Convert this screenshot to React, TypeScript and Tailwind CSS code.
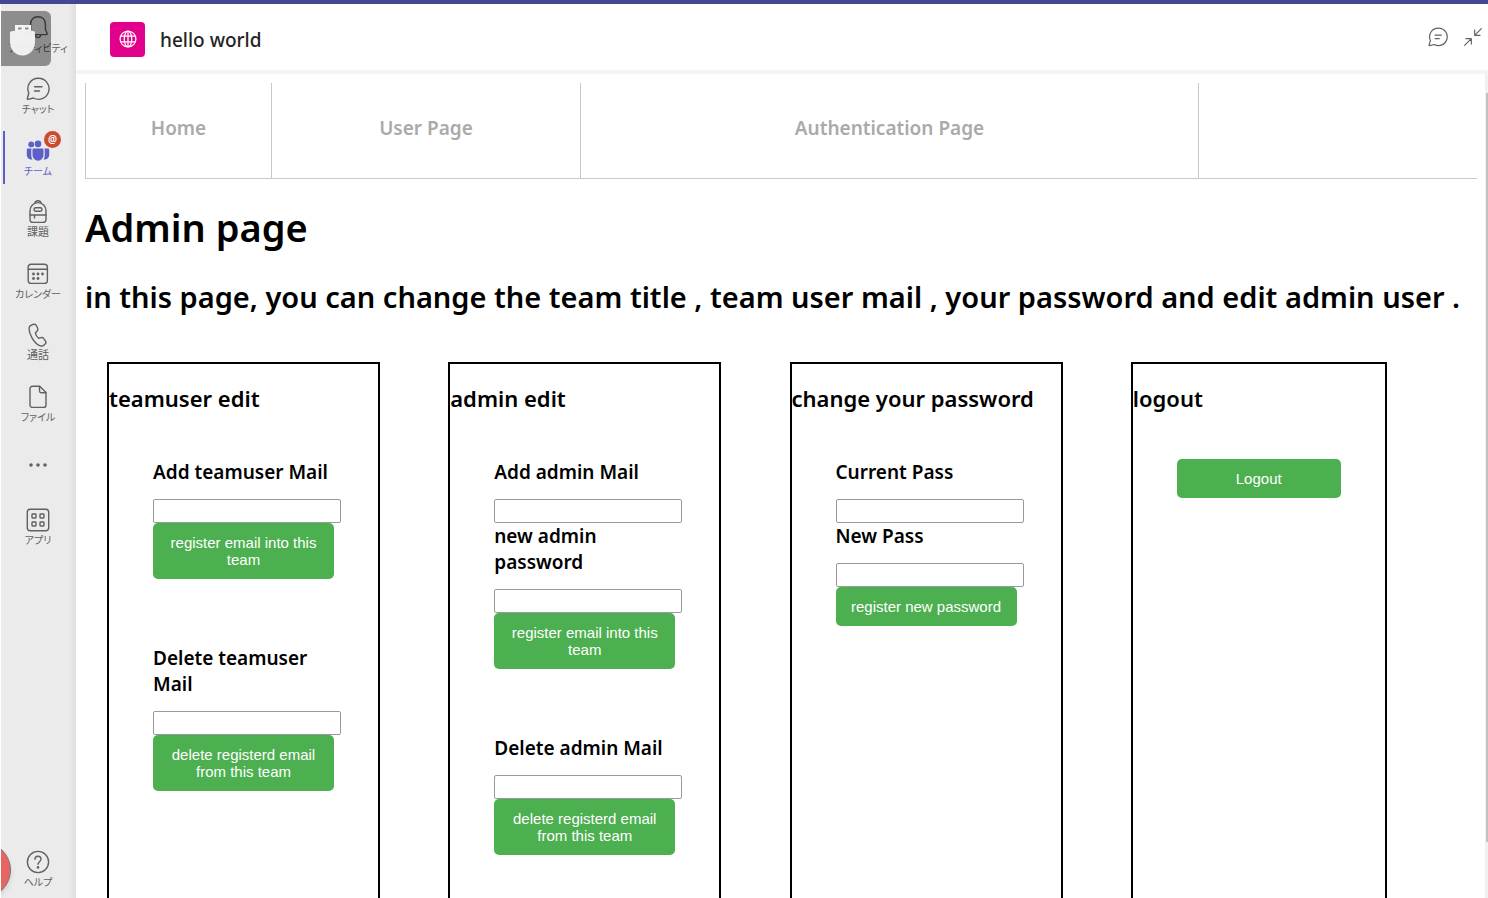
import type { ReactNode } from "react";

const uiFont = "font-['Noto_Sans','Noto_Sans_CJK_JP',sans-serif]";

function Line({ size, children }: { size: string; children: ReactNode }) {
  return (
    <svg viewBox="0 0 24 24" className={size} fill="none" stroke="currentColor" strokeWidth="1.4" strokeLinecap="round" strokeLinejoin="round" aria-hidden="true">
      {children}
    </svg>
  );
}

function BellIcon() {
  return (
    <Line size="size-6">
      <path d="M12 .8c-4.500 0-7.400 3-7.400 7.200v5.200L2.900 17.600c-.2.500.1 1 .7 1h16.800c.6 0 .9-.5.7-1L19.400 13.200V8c0-4.200-2.900-7.200-7.400-7.200z" />
      <path d="M9.200 18.600c.3 1.900 1.400 3 2.800 3s2.500-1.100 2.800-3" />
    </Line>
  );
}

function ChatIcon({ size }: { size: string }) {
  return (
    <Line size={size}>
      <path d="M12.500 1.300a10.500 10.500 0 1 1-5 19.700L2 22.400a.6.600 0 0 1-.7-.7L2.800 16A10.400 10.400 0 0 1 12.500 1.300z" />
      <path d="M8.500 9.800h7.500M8.500 14h5" />
    </Line>
  );
}

function TeamsIcon() {
  return (
    <svg viewBox="0 0 24 24" className="size-6" fill="currentColor" aria-hidden="true">
      <circle cx="5.200" cy="5.400" r="2.900" />
      <circle cx="12" cy="4.900" r="3.300" />
      <path d="M7.700 9.500h8.600c.7 0 1.200.5 1.200 1.200v5.500a5.500 5.500 0 0 1-11 0v-5.500c0-.7.500-1.200 1.200-1.200z" />
      <path d="M2 9.500h3.700c-.3.500-.4.900-.4 1.400v5.500c0 1.600.5 2.900 1.300 4-3.300.4-5.800-1.500-5.800-4.700v-5c0-.7.5-1.200 1.200-1.200z" />
      <path d="M18.300 9.500H22c.7 0 1.200.5 1.200 1.200v5c0 3.200-2.500 5.100-5.800 4.700.8-1.100 1.300-2.400 1.300-4v-5.500c0-.5-.1-.9-.4-1.400z" />
    </svg>
  );
}

function BackpackIcon() {
  return (
    <Line size="size-6">
      <path d="M4 10.600a8 8 0 0 1 16 0v8.600a3.200 3.200 0 0 1-3.200 3.200H7.200A3.200 3.200 0 0 1 4 19.200z" />
      <path d="M8.800 3.200c.4-1.600 1.600-2.500 3.200-2.500s2.800.9 3.200 2.500M4 15h16M8.500 15v3" />
      <rect x="8" y="7.800" width="8" height="3.400" rx="1.700" />
    </Line>
  );
}

function CalendarIcon() {
  return (
    <Line size="size-6">
      <rect x="2.200" y="2.200" width="19.200" height="19.200" rx="3" />
      <path d="M2.200 7.200h19.200" />
      <g fill="currentColor" stroke="none">
        <circle cx="7.500" cy="12" r="1.400" />
        <circle cx="12" cy="12" r="1.400" />
        <circle cx="16.500" cy="12" r="1.400" />
        <circle cx="7.500" cy="16.500" r="1.400" />
        <circle cx="12" cy="16.500" r="1.400" />
      </g>
    </Line>
  );
}

function PhoneIcon() {
  return (
    <Line size="size-6">
      <path d="M6.200 1.700l1.500-.4c1.200-.3 2.300.3 2.800 1.400l1.100 2.600c.4 1 .2 2.100-.6 2.900L9.300 9.800c.4 2 1.800 4.400 3.500 5.600l2.200-.7c1-.3 2.100 0 2.700.9l1.700 2.300c.7 1 .6 2.300-.3 3.100l-1 .9c-1 1-2.500 1.300-3.800.9-3.300-1-6-4-8.300-8C3.700 10.800 2.500 7 3.400 3.900c.4-1.100 1.500-1.900 2.800-2.200z" />
    </Line>
  );
}

function FileIcon() {
  return (
    <Line size="size-6">
      <path d="M6.500 1.300h7.200l6.300 6.300v12.300a2.500 2.500 0 0 1-2.500 2.500h-11A2.500 2.500 0 0 1 4 19.900V3.800a2.500 2.500 0 0 1 2.500-2.500z" />
      <path d="M13.500 1.500v4.600c0 1 .7 1.700 1.700 1.700h4.600" />
    </Line>
  );
}

function AppsIcon() {
  return (
    <Line size="size-6">
      <rect x="1.300" y="1.300" width="21.400" height="21.400" rx="3" />
      <rect x="6" y="6" width="4" height="4" rx=".7" />
      <rect x="14" y="6" width="4" height="4" rx=".7" />
      <rect x="6" y="14" width="4" height="4" rx=".7" />
      <rect x="14" y="14" width="4" height="4" rx=".7" />
    </Line>
  );
}

function HelpIcon() {
  return (
    <Line size="size-6">
      <circle cx="12" cy="12" r="10.600" />
      <path d="M9 9.200c0-1.800 1.300-3 3-3s3 1.200 3 2.900c0 2.400-3 2.700-3 5.200" />
      <circle cx="12" cy="17.400" r=".6" fill="currentColor" />
    </Line>
  );
}

function DotsIcon() {
  return (
    <svg viewBox="0 0 24 24" className="size-6" fill="currentColor" aria-hidden="true">
      <circle cx="5" cy="12" r="1.800" />
      <circle cx="12" cy="12" r="1.800" />
      <circle cx="19" cy="12" r="1.800" />
    </svg>
  );
}

function GlobeIcon() {
  return (
    <svg viewBox="0 0 24 24" className="size-5" fill="none" stroke="currentColor" strokeWidth="1.500" aria-hidden="true">
      <circle cx="12" cy="12" r="9.500" />
      <ellipse cx="12" cy="12" rx="4.500" ry="9.500" />
      <path d="M12 2.500v19M3.500 8.500h17M3.500 15.500h17" />
    </svg>
  );
}

function CollapseIcon() {
  return (
    <Line size="size-5">
      <path d="M22 2L14 10M14 3.500v6.500h6.500M2 22L10 14M3.500 14h6.500v6.500" />
    </Line>
  );
}

function RailItem({ icon, label, wide, active }: { icon: ReactNode; label: string; wide?: boolean; active?: boolean }) {
  return (
    <button
      type="button"
      className={`relative flex w-full flex-col items-center pt-3 ${active ? "text-[#5b5fc7]" : "text-[#616161]"}`}
    >
      {active && <span className="absolute top-1 left-0.5 h-[53px] w-0.5 bg-[#5b5fc7]" />}
      {icon}
      <span className={`leading-4 whitespace-nowrap [font-feature-settings:'palt'] ${wide ? "text-[11px]" : "text-[10px]"}`}>{label}</span>
      {active && (
        <span className="absolute top-1 left-[43px] flex size-[17px] items-center justify-center rounded-full bg-[#cc4a31] text-[10px] leading-none font-semibold text-white">
          @
        </span>
      )}
    </button>
  );
}

function Field({ id, label, type = "text" }: { id: string; label: string; type?: string }) {
  return (
    <div>
      <label htmlFor={id} className="mb-3.5 block text-[19px] leading-[26px] font-semibold">
        {label}
      </label>
      <input id={id} type={type} className="block h-6 w-[188px] rounded-xs border border-[#999] bg-white px-1 text-sm" />
    </div>
  );
}

function GreenButton({ children }: { children: ReactNode }) {
  return (
    <button type="submit" className="block w-full rounded-[5px] bg-[#4caf50] px-3 py-[11px] font-['Liberation_Sans',sans-serif] text-[15px] leading-[17px] text-white">
      {children}
    </button>
  );
}

function Card({ title, narrow, children }: { title: string; narrow?: boolean; children: ReactNode }) {
  return (
    <section className={`h-[640px] border-2 border-black pt-[18px] ${narrow ? "w-3/4" : "w-4/5"}`}>
      <h3 className="text-[22px] leading-[33px] font-semibold whitespace-nowrap">{title}</h3>
      <div className="flex flex-col gap-[66px] px-11 pt-11">{children}</div>
    </section>
  );
}

function Form({ children }: { children: ReactNode }) {
  return <form onSubmit={(e) => e.preventDefault()}>{children}</form>;
}

export default function App() {
  return (
    <div className={`flex h-screen flex-col overflow-hidden bg-white text-black ${uiFont}`}>
      <div className="h-1 shrink-0 bg-[#444791]" />
      <div className="flex min-h-0 flex-1">
        <aside className="relative ml-px flex w-[75px] shrink-0 flex-col justify-between overflow-hidden bg-linear-to-r from-[#ebebeb] from-90% to-[#dfdfdf] pr-px">
          <div className="grid h-[553px] auto-rows-fr">
            <RailItem icon={<BellIcon />} label="アクティビティ" />
            <RailItem icon={<ChatIcon size="size-6" />} label="チャット" />
            <RailItem icon={<TeamsIcon />} label="チーム" active />
            <RailItem icon={<BackpackIcon />} label="課題" wide />
            <RailItem icon={<CalendarIcon />} label="カレンダー" />
            <RailItem icon={<PhoneIcon />} label="通話" wide />
            <RailItem icon={<FileIcon />} label="ファイル" />
            <button type="button" aria-label="その他" className="flex items-center justify-center text-[#616161]">
              <DotsIcon />
            </button>
            <RailItem icon={<AppsIcon />} label="アプリ" />
          </div>
          <div className="h-[60px]">
            <RailItem icon={<HelpIcon />} label="ヘルプ" />
          </div>
          <div className="absolute top-[7px] left-0 h-[55px] w-[50px] rounded-r-md bg-black/40">
            <svg viewBox="0 0 50 55" className="size-full" aria-hidden="true">
              <path d="M14 14h16v6H14z" fill="#f4f4f4" />
              <path d="M12 20h20c1.500 0 2 .7 2 2v9c0 8-5.500 13.500-12.500 13.500S9 39 9 31v-9c0-1.300 1-2 3-2z" fill="#f4f4f4" fillOpacity=".96" />
              <path d="M17 17.500h3.500M24 17.500h3.500" stroke="#8c8c8c" strokeWidth="2" />
            </svg>
          </div>
          <div className="absolute bottom-0 -left-[46px] size-14 rounded-full border border-[#777] bg-[#e96564] shadow-md" />
        </aside>

        <div className="flex min-w-0 flex-1 flex-col">
          <header className="flex h-[70px] shrink-0 items-center border-b-4 border-[#f4f4f4] pr-[5px] pl-[34px]">
            <span className="mt-1 flex size-[35px] items-center justify-center rounded bg-[#e3008c] text-white">
              <GlobeIcon />
            </span>
            <h1 className="mt-1.5 ml-[15px] flex-1 text-[19px] leading-7 font-medium text-[#242424]">hello world</h1>
            <div className="flex gap-[15px] text-[#616161]">
              <button type="button" aria-label="Chat">
                <ChatIcon size="size-5" />
              </button>
              <button type="button" aria-label="Collapse">
                <CollapseIcon />
              </button>
            </div>
          </header>

          <div className="flex min-h-0 flex-1">
            <main className="min-w-0 flex-1 overflow-hidden pt-[9px] pr-2 pl-[9px]">
              <nav className="grid h-24 grid-cols-[186fr_309fr_618fr_279fr] border-b border-[#c8c8c8] text-[19px] font-semibold text-[#aaa]">
                <a href="#home" className="flex items-center justify-center border-l border-[#c8c8c8] pb-1">
                  Home
                </a>
                <a href="#user" className="flex items-center justify-center border-l border-[#c8c8c8] pb-1">
                  User Page
                </a>
                <a href="#auth" className="flex items-center justify-center border-l border-[#c8c8c8] pb-1">
                  Authentication Page
                </a>
                <span className="border-l border-[#c8c8c8]" />
              </nav>

              <h1 className="mt-[22px] text-[38px] leading-[52px] font-semibold">Admin page</h1>
              <h2 className="mt-[23px] text-[29px] leading-[42px] font-semibold whitespace-nowrap">
                in this page, you can change the team title , team user mail , your password and edit admin user .
              </h2>

              <div className="mt-11 grid grid-cols-4 pr-[5px] pl-[22px]">
                <Card title="teamuser edit">
                  <Form>
                    <Field id="add-user" label="Add teamuser Mail" />
                    <GreenButton>register email into this team</GreenButton>
                  </Form>
                  <Form>
                    <Field id="delete-user" label="Delete teamuser Mail" />
                    <GreenButton>delete registerd email from this team</GreenButton>
                  </Form>
                </Card>
                <Card title="admin edit">
                  <Form>
                    <Field id="add-admin" label="Add admin Mail" />
                    <Field id="admin-pass" label="new admin password" type="password" />
                    <GreenButton>register email into this team</GreenButton>
                  </Form>
                  <Form>
                    <Field id="delete-admin" label="Delete admin Mail" />
                    <GreenButton>delete registerd email from this team</GreenButton>
                  </Form>
                </Card>
                <Card title="change your password">
                  <Form>
                    <Field id="current-pass" label="Current Pass" type="password" />
                    <Field id="new-pass" label="New Pass" type="password" />
                    <GreenButton>register new password</GreenButton>
                  </Form>
                </Card>
                <Card title="logout" narrow>
                  <Form>
                    <GreenButton>Logout</GreenButton>
                  </Form>
                </Card>
              </div>
            </main>
            <div className="w-[3px] shrink-0 bg-[#f1f1f1] pt-[19px] pl-px">
              <div className="h-[93%] bg-[#c1c1c1]" />
            </div>
          </div>
        </div>
      </div>
    </div>
  );
}
